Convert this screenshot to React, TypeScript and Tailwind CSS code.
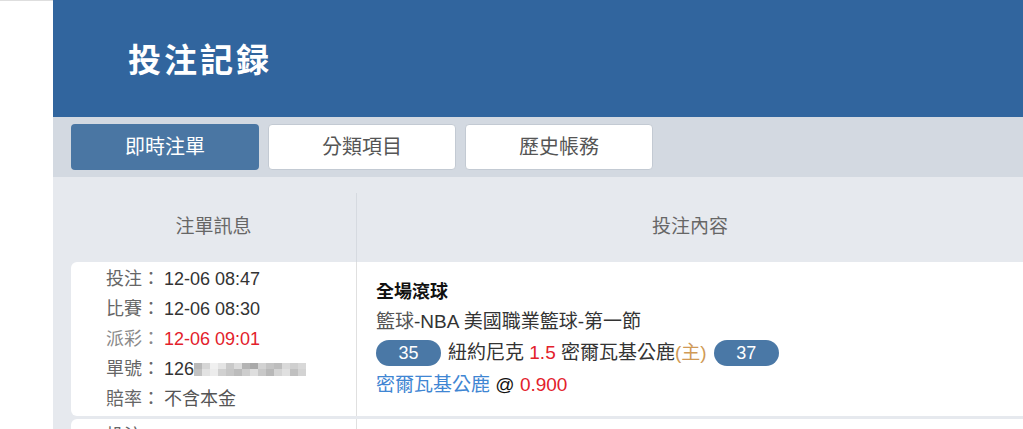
import React from 'react';

const mosaic = [
  ['bg-[#b9b9b9]', 'bg-[#d6d6d6]', 'bg-[#f0f0f0]', 'bg-[#e4e4e4]', 'bg-[#c9c9c9]', 'bg-[#dcdcdc]', 'bg-[#b4b4b4]', 'bg-[#a9a9a9]', 'bg-[#d2d2d2]', 'bg-[#c4c4c4]', 'bg-[#bdbdbd]', 'bg-[#d9d9d9]', 'bg-[#cfcfcf]', 'bg-[#d8d8d8]'],
  ['bg-[#c2c2c2]', 'bg-[#e2e2e2]', 'bg-[#ececec]', 'bg-[#d0d0d0]', 'bg-[#c6c6c6]', 'bg-[#bcbcbc]', 'bg-[#cdcdcd]', 'bg-[#dedede]', 'bg-[#c8c8c8]', 'bg-[#b8b8b8]', 'bg-[#d4d4d4]', 'bg-[#e0e0e0]', 'bg-[#c0c0c0]', 'bg-[#d3d3d3]'],
];

function InfoLine({ label, children, dim }: { label: string; children: React.ReactNode; dim?: boolean }) {
  return (
    <div className="flex h-[30px] items-center">
      <span className={`w-[58px] shrink-0 ${dim ? 'text-[#8a8a8a]' : 'text-[#666]'}`}>{label}：</span>
      {children}
    </div>
  );
}

function Pill({ n }: { n: string }) {
  return (
    <span className="inline-flex h-[26px] w-[65px] items-center justify-center rounded-full bg-[#4a78a6] text-[18px] text-white">
      {n}
    </span>
  );
}

export default function App() {
  return (
    <div className="flex h-[429px] w-full overflow-hidden bg-white font-['Liberation_Sans','Noto_Sans_CJK_TC',sans-serif]">
      <div className="w-[53px] shrink-0 border-t border-[#dedede]" />
      <div className="flex min-w-0 flex-1 flex-col">
        <header className="flex h-[117px] shrink-0 items-center bg-[#31659e] pl-[75px]">
          <h1 className="font-['Noto_Sans_CJK_TC',serif] text-[33px] font-bold tracking-[3px] text-white">投注記録</h1>
        </header>

        <div className="flex h-[60px] shrink-0 items-center gap-[9px] bg-[#d3d9e1] pl-[18px]">
          <button className="h-[46px] w-[188px] rounded-[4px] bg-[#4a76a3] text-[20px] text-white">即時注單</button>
          <button className="h-[46px] w-[188px] rounded-[4px] border border-[#c3cad3] bg-white text-[20px] text-[#555]">分類項目</button>
          <button className="h-[46px] w-[188px] rounded-[4px] border border-[#c3cad3] bg-white text-[20px] text-[#555]">歷史帳務</button>
        </div>

        <div className="flex-1 bg-[#e6e9ee] pl-[18px] pt-[16px]">
          <div className="flex h-[69px] text-[19px] text-[#666]">
            <div className="flex w-[285px] shrink-0 items-center justify-center">注單訊息</div>
            <div className="flex flex-1 items-center justify-center border-l border-[#d6dae0]">投注內容</div>
          </div>

          <div className="flex h-[154px] rounded-l-[6px] bg-white">
            <div className="w-[285px] shrink-0 py-[2px] pl-[35px] text-[18px] text-[#333]">
              <InfoLine label="投注">12-06 08:47</InfoLine>
              <InfoLine label="比賽">12-06 08:30</InfoLine>
              <InfoLine label="派彩" dim>
                <span className="text-[#e3212b]">12-06 09:01</span>
              </InfoLine>
              <InfoLine label="單號">
                <span>126</span>
                <span className="flex flex-col">
                  {mosaic.map((row, i) => (
                    <span key={i} className="flex">
                      {row.map((c, j) => (
                        <span key={j} className={`h-[6.5px] w-[8px] ${c}`} />
                      ))}
                    </span>
                  ))}
                </span>
              </InfoLine>
              <InfoLine label="賠率">
                <span className="text-[#555]">不含本金</span>
              </InfoLine>
            </div>
            <div className="flex-1 border-l border-[#e0e0e0] pl-[19px] pt-[15px] text-[19px] text-[#333]">
              <div className="h-[30px] text-[18px] font-bold leading-[30px] text-[#111]">全場滾球</div>
              <div className="h-[30px] leading-[30px]">
                <span className="text-[#555]">籃球</span>-NBA 美國職業籃球-第一節
              </div>
              <div className="flex h-[32px] items-center gap-[7px]">
                <Pill n="35" />
                <span>
                  紐約尼克 <span className="text-[#e3212b]">1.5</span> 密爾瓦基公鹿
                  <span className="text-[#d09a56]">(主)</span>
                </span>
                <Pill n="37" />
              </div>
              <div className="h-[30px] leading-[32px]">
                <span className="text-[#3f86d3]">密爾瓦基公鹿</span> <span className="text-[#111]">@</span>{' '}
                <span className="text-[#e3212b]">0.900</span>
              </div>
            </div>
          </div>

          <div className="mt-[3px] flex h-[154px] rounded-l-[6px] bg-white">
            <div className="w-[285px] shrink-0 py-[2px] pl-[35px] text-[18px] text-[#333]">
              <InfoLine label="投注">12-06 08:40</InfoLine>
            </div>
            <div className="flex-1 border-l border-[#e0e0e0]" />
          </div>
        </div>
      </div>
    </div>
  );
}
